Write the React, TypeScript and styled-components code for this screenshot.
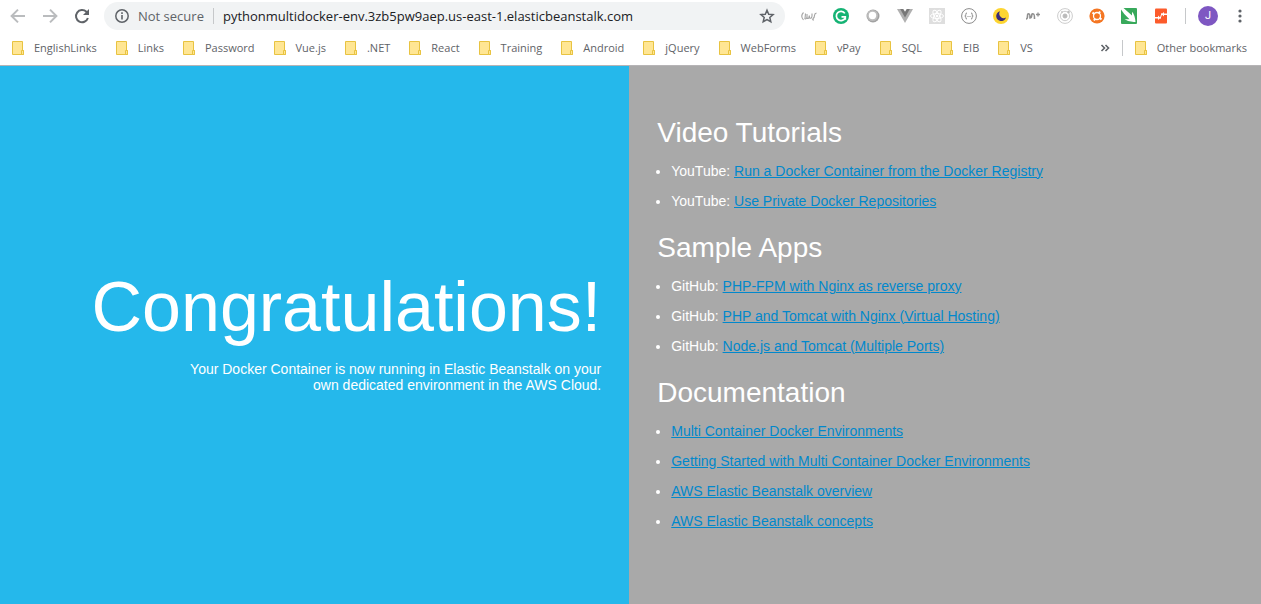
import React from "react";
import styled, { createGlobalStyle } from "styled-components";

const GlobalStyle = createGlobalStyle`
  *, *::before, *::after { box-sizing: border-box; }
  html, body { margin: 0; padding: 0; }
  body {
    background: #fff;
    font-family: "Liberation Sans", Arial, sans-serif;
    font-size: 14px;
  }
`;

const uiFont = `"Open Sans", "Noto Sans", sans-serif`;

const Page = styled.div`
  display: flex;
  flex-direction: column;
  min-height: 100vh;
`;

const Toolbar = styled.header`
  display: flex;
  align-items: center;
  height: 32px;
  padding: 0 13px 0 2px;
  font-family: ${uiFont};
`;

const IconButton = styled.button<{ $width?: number }>`
  display: flex;
  align-items: center;
  justify-content: center;
  flex: none;
  width: ${(p) => p.$width ?? 32}px;
  height: 28px;
  padding: 0;
  border: 0;
  background: none;
  color: #5f6368;
  svg { display: block; }
  &:disabled { color: #babcbe; }
`;

const Omnibox = styled.div`
  display: flex;
  align-items: center;
  flex: 1;
  min-width: 0;
  height: 28px;
  margin: 0 8px 0 6px;
  padding: 0 2px 0 10px;
  border-radius: 14px;
  background: #f1f3f4;
`;

const Security = styled.button`
  display: flex;
  align-items: center;
  gap: 8px;
  flex: none;
  padding: 0;
  border: 0;
  background: none;
  font: 13px/20px ${uiFont};
  color: #5f6368;
`;

const Divider = styled.span<{ $gap: number }>`
  flex: none;
  width: 1px;
  height: 16px;
  margin: 0 ${(p) => p.$gap}px;
  background: #c6c8ca;
`;

const Address = styled.input`
  flex: 1;
  min-width: 0;
  padding: 0;
  border: 0;
  outline: 0;
  background: none;
  font: 13px/20px ${uiFont};
  color: #202124;
`;

const Avatar = styled.button`
  flex: none;
  width: 20px;
  height: 20px;
  margin: 0 14px 0 4px;
  padding: 0;
  border: 0;
  border-radius: 50%;
  background: #7e57c2;
  color: #fff;
  font: 11px/20px Roboto, sans-serif;
`;

const BookmarkBar = styled.nav`
  display: flex;
  align-items: center;
  height: 34px;
  padding: 0 14px 2px 12px;
  border-bottom: 1px solid #b6b4b6;
  font: 11px/16px ${uiFont};
`;

const Bookmarks = styled.div`
  display: flex;
  flex: 1;
  gap: 19px;
  min-width: 0;
  overflow: hidden;
`;

const Bookmark = styled.a`
  display: flex;
  align-items: center;
  gap: 10px;
  flex: none;
  color: #5f6368;
  text-decoration: none;
  white-space: nowrap;
`;

const Main = styled.main`
  display: flex;
  flex: 1;
  color: #fff;
`;

const Welcome = styled.section`
  display: flex;
  flex-direction: column;
  align-items: flex-end;
  justify-content: center;
  flex: 0 0 49.9%;
  padding: 0 28px 11px;
  background: #25b8eb;
  text-align: right;
`;

const Title = styled.h1`
  margin: 0 0 14px;
  font-size: 70px;
  line-height: 80px;
  font-weight: 400;
`;

const Lead = styled.p`
  max-width: 430px;
  margin: 0;
  line-height: 16px;
`;

const Resources = styled.section`
  display: flex;
  flex-direction: column;
  justify-content: center;
  flex: 1;
  padding: 0 28px 34px;
  background: #a9a9a9;
`;

const Heading = styled.h2`
  margin: 16px 0 7px;
  font-size: 28px;
  line-height: 32px;
  font-weight: 400;
`;

const List = styled.ul`
  margin: 0;
  padding: 0 0 0 14px;
  line-height: 30px;
`;

const ResourceLink = styled.a`
  color: #0188cc;
  text-decoration: underline;
`;

const Back = () => (
  <svg width="16" height="16" viewBox="0 0 16 16" fill="none" stroke="currentColor" strokeWidth="2">
    <path d="M15 8H2.4M8 1.6 1.6 8 8 14.4" />
  </svg>
);

const Forward = () => (
  <svg width="16" height="16" viewBox="0 0 16 16" fill="none" stroke="currentColor" strokeWidth="2">
    <path d="M1 8h12.6M8 1.6 14.4 8 8 14.4" />
  </svg>
);

const Reload = () => (
  <svg width="16" height="16" viewBox="0 0 16 16" fill="none" stroke="currentColor" strokeWidth="2">
    <path d="M13.9 10A6.1 6.1 0 1 1 12.4 3.8L14 5.4" />
    <path d="M15 1v6H9z" fill="currentColor" stroke="none" />
  </svg>
);

const Info = () => (
  <svg width="16" height="16" viewBox="0 0 16 16" fill="none" stroke="currentColor">
    <circle cx="8" cy="8" r="6.2" strokeWidth="1.5" />
    <path d="M8 7v4.4M8 4.3V6" strokeWidth="1.6" />
  </svg>
);

const Star = () => (
  <svg width="16" height="16" viewBox="0 0 16 16" fill="none" stroke="currentColor" strokeWidth="1.5">
    <path d="m8 2.2 1.7 4 4.4.4-3.3 2.9 1 4.2L8 11.5l-3.8 2.2 1-4.2-3.3-2.9 4.4-.4z" />
  </svg>
);

const Dots = () => (
  <svg width="16" height="16" viewBox="0 0 16 16" fill="currentColor">
    <circle cx="8" cy="3" r="1.6" />
    <circle cx="8" cy="8" r="1.6" />
    <circle cx="8" cy="13" r="1.6" />
  </svg>
);

const Overflow = () => (
  <svg width="10" height="8" viewBox="0 0 10 8" fill="none" stroke="currentColor" strokeWidth="1.6">
    <path d="m1.5 1 3 3-3 3M5.5 1l3 3-3 3" />
  </svg>
);

const Folder = () => (
  <svg width="12" height="14" viewBox="0 0 12 14" fill="#ffe694" stroke="#e8c341">
    <path d="M.5.5h10v9h1v4H.5z" />
    <path d="M9.5 13.5v-4h2v4z" />
  </svg>
);

const extensions: { name: string; art: React.ReactNode }[] = [
  {
    name: "JSON viewer",
    art: (
      <g fill="none" stroke="#a3a3a3" strokeWidth="1.1">
        <path d="M2.5 4.500Q-1 8 2.500 12M4.500 5.500l-.5 5M6 6v4q1.500 1.500 2-1l.3-1.500.3 2.500q2 1 2.400-2V5.500" />
        <path d="M3.500 10.500q1.500 1 2.500-1M12 10.500q1.500-1 1.500-3T15.500 5M13 12q-2 0-1-1.500" />
      </g>
    ),
  },
  {
    name: "Grammarly",
    art: (
      <>
        <circle cx="8" cy="8" r="8" fill="#15b374" />
        <path d="M11.8 5.4A4.6 4.6 0 1 0 12.2 9.8" fill="none" stroke="#fff" strokeWidth="1.7" />
        <path d="M8.5 8.8h3.8v3" fill="none" stroke="#fff" strokeWidth="1.7" />
      </>
    ),
  },
  {
    name: "Color picker",
    art: (
      <>
        <circle cx="8" cy="8" r="6.5" fill="#a2a2a2" />
        <circle cx="7.5" cy="7.5" r="5.5" fill="#bdbdbd" />
        <circle cx="7.5" cy="7.5" r="3.7" fill="#fff" />
      </>
    ),
  },
  {
    name: "Vue devtools",
    art: (
      <>
        <path d="M0 1h16L8 15z" fill="#b0b0b0" />
        <path d="M3.2 1h9.6L8 9.5z" fill="#777" />
        <path d="M6.3 1h3.4L8 3.8z" fill="#fff" />
      </>
    ),
  },
  {
    name: "React tools",
    art: (
      <>
        <path d="M0 0h16v16H0z" fill="#dedede" />
        <g fill="none" stroke="#fff">
          <ellipse cx="8" cy="8" rx="6.5" ry="2.5" />
          <ellipse cx="8" cy="8" rx="6.5" ry="2.5" transform="rotate(60 8 8)" />
          <ellipse cx="8" cy="8" rx="6.5" ry="2.5" transform="rotate(120 8 8)" />
        </g>
        <circle cx="8" cy="8" r="1.3" fill="#fff" />
      </>
    ),
  },
  {
    name: "JSON formatter",
    art: (
      <g fill="none" stroke="#8b8b8b">
        <circle cx="8" cy="8" r="7.4" />
        <path d="M6 5Q4.5 5 4.8 6.5T3.800 8q1.200 0 1 1.500T6 11M10 5q1.500 0 1.200 1.500t1 1.500q-1.200 0-1 1.500T10 11" />
        <path d="M6.5 8.5h1M8.5 8.5h1" />
      </g>
    ),
  },
  {
    name: "Night mode",
    art: (
      <>
        <circle cx="8" cy="8" r="8" fill="#fdd531" />
        <path d="M7 3.2A5 5 0 1 0 13 9.5 4.5 4.5 0 0 1 7 3.2z" fill="#392a78" />
      </>
    ),
  },
  {
    name: "Momentum",
    art: (
      <g fill="none" stroke="#8f8f8f" strokeWidth="1.6">
        <path d="M1 11q1.500 0 1.500-3T4 6q1 0 1 4 1.500 0 1.700-2.500T8.300 6Q9.500 6 9.500 11" />
        <path d="M11 6.500h4M13 4.500v4" strokeWidth="1.3" />
      </g>
    ),
  },
  {
    name: "Orbit",
    art: (
      <g fill="none" stroke="#ccc">
        <circle cx="8" cy="8" r="7.4" />
        <circle cx="8" cy="8" r="4.7" />
        <circle cx="8" cy="8" r="2" fill="#bbb" stroke="#bbb" />
        <circle cx="11.5" cy="4" r="1" fill="#aaa" />
        <circle cx="5" cy="4" r=".6" fill="#aaa" />
      </g>
    ),
  },
  {
    name: "Support",
    art: (
      <>
        <circle cx="8" cy="8" r="7.6" fill="#f47623" />
        <circle cx="8" cy="8" r="3.5" fill="none" stroke="#fff" strokeWidth="1.3" />
        <path d="m3.500 4.500 2 1.700M11 3.500 9.700 5.500M5 12.500l1.300-2M12.500 11.500l-2-1.700" stroke="#fff" strokeWidth="2" />
      </>
    ),
  },
  {
    name: "Capture",
    art: (
      <>
        <rect width="16" height="16" rx="1" fill="#38a95b" />
        <path d="M0 1.500V0h2.500L11 7.500V3.800Q14 7 14.500 14 8 14.500 3.500 11.300h5Q3 6.500 0 1.500z" fill="#fff" />
      </>
    ),
  },
  {
    name: "Compare",
    art: (
      <>
        <rect x="2" y="0.5" width="12" height="15" rx="1" fill="#fc5b2b" />
        <path d="M14 5.500h-3V4L8.500 6.200 11 8.500V7h3M2 9h3V7.500l2.500 2.300L5 12v-1.500H2" fill="#fff" />
        <path d="M9 5 7 11" stroke="#fff" strokeWidth="1" />
      </>
    ),
  },
];

const bookmarks = [
  "EnglishLinks", "Links", "Password", "Vue.js", ".NET", "React", "Training",
  "Android", "jQuery", "WebForms", "vPay", "SQL", "EIB", "VS",
];

const sections: { title: string; items: { prefix?: string; label: string }[] }[] = [
  {
    title: "Video Tutorials",
    items: [
      { prefix: "YouTube:", label: "Run a Docker Container from the Docker Registry" },
      { prefix: "YouTube:", label: "Use Private Docker Repositories" },
    ],
  },
  {
    title: "Sample Apps",
    items: [
      { prefix: "GitHub:", label: "PHP-FPM with Nginx as reverse proxy" },
      { prefix: "GitHub:", label: "PHP and Tomcat with Nginx (Virtual Hosting)" },
      { prefix: "GitHub:", label: "Node.js and Tomcat (Multiple Ports)" },
    ],
  },
  {
    title: "Documentation",
    items: [
      { label: "Multi Container Docker Environments" },
      { label: "Getting Started with Multi Container Docker Environments" },
      { label: "AWS Elastic Beanstalk overview" },
      { label: "AWS Elastic Beanstalk concepts" },
    ],
  },
];

export default function App() {
  return (
    <Page>
      <GlobalStyle />
      <Toolbar>
        <IconButton aria-label="Back" disabled><Back /></IconButton>
        <IconButton aria-label="Forward" disabled><Forward /></IconButton>
        <IconButton aria-label="Reload"><Reload /></IconButton>
        <Omnibox>
          <Security><Info />Not secure</Security>
          <Divider $gap={9} />
          <Address
            aria-label="Address"
            defaultValue="pythonmultidocker-env.3zb5pw9aep.us-east-1.elasticbeanstalk.com"
          />
          <IconButton aria-label="Bookmark this page"><Star /></IconButton>
        </Omnibox>
        {extensions.map((ext) => (
          <IconButton key={ext.name} aria-label={ext.name}>
            <svg width="16" height="16" viewBox="0 0 16 16">{ext.art}</svg>
          </IconButton>
        ))}
        <Divider $gap={8} />
        <Avatar aria-label="Profile">J</Avatar>
        <IconButton aria-label="Menu" $width={16}><Dots /></IconButton>
      </Toolbar>
      <BookmarkBar aria-label="Bookmarks">
        <Bookmarks>
          {bookmarks.map((name) => (
            <Bookmark key={name} href="#"><Folder />{name}</Bookmark>
          ))}
        </Bookmarks>
        <IconButton aria-label="More bookmarks" $width={10}><Overflow /></IconButton>
        <Divider $gap={12} />
        <Bookmark href="#"><Folder />Other bookmarks</Bookmark>
      </BookmarkBar>
      <Main>
        <Welcome>
          <Title>Congratulations!</Title>
          <Lead>
            Your Docker Container is now running in Elastic Beanstalk on your own
            dedicated environment in the AWS Cloud.
          </Lead>
        </Welcome>
        <Resources>
          {sections.map((section) => (
            <React.Fragment key={section.title}>
              <Heading>{section.title}</Heading>
              <List>
                {section.items.map((item) => (
                  <li key={item.label}>
                    {item.prefix && `${item.prefix} `}
                    <ResourceLink href="#">{item.label}</ResourceLink>
                  </li>
                ))}
              </List>
            </React.Fragment>
          ))}
        </Resources>
      </Main>
    </Page>
  );
}
